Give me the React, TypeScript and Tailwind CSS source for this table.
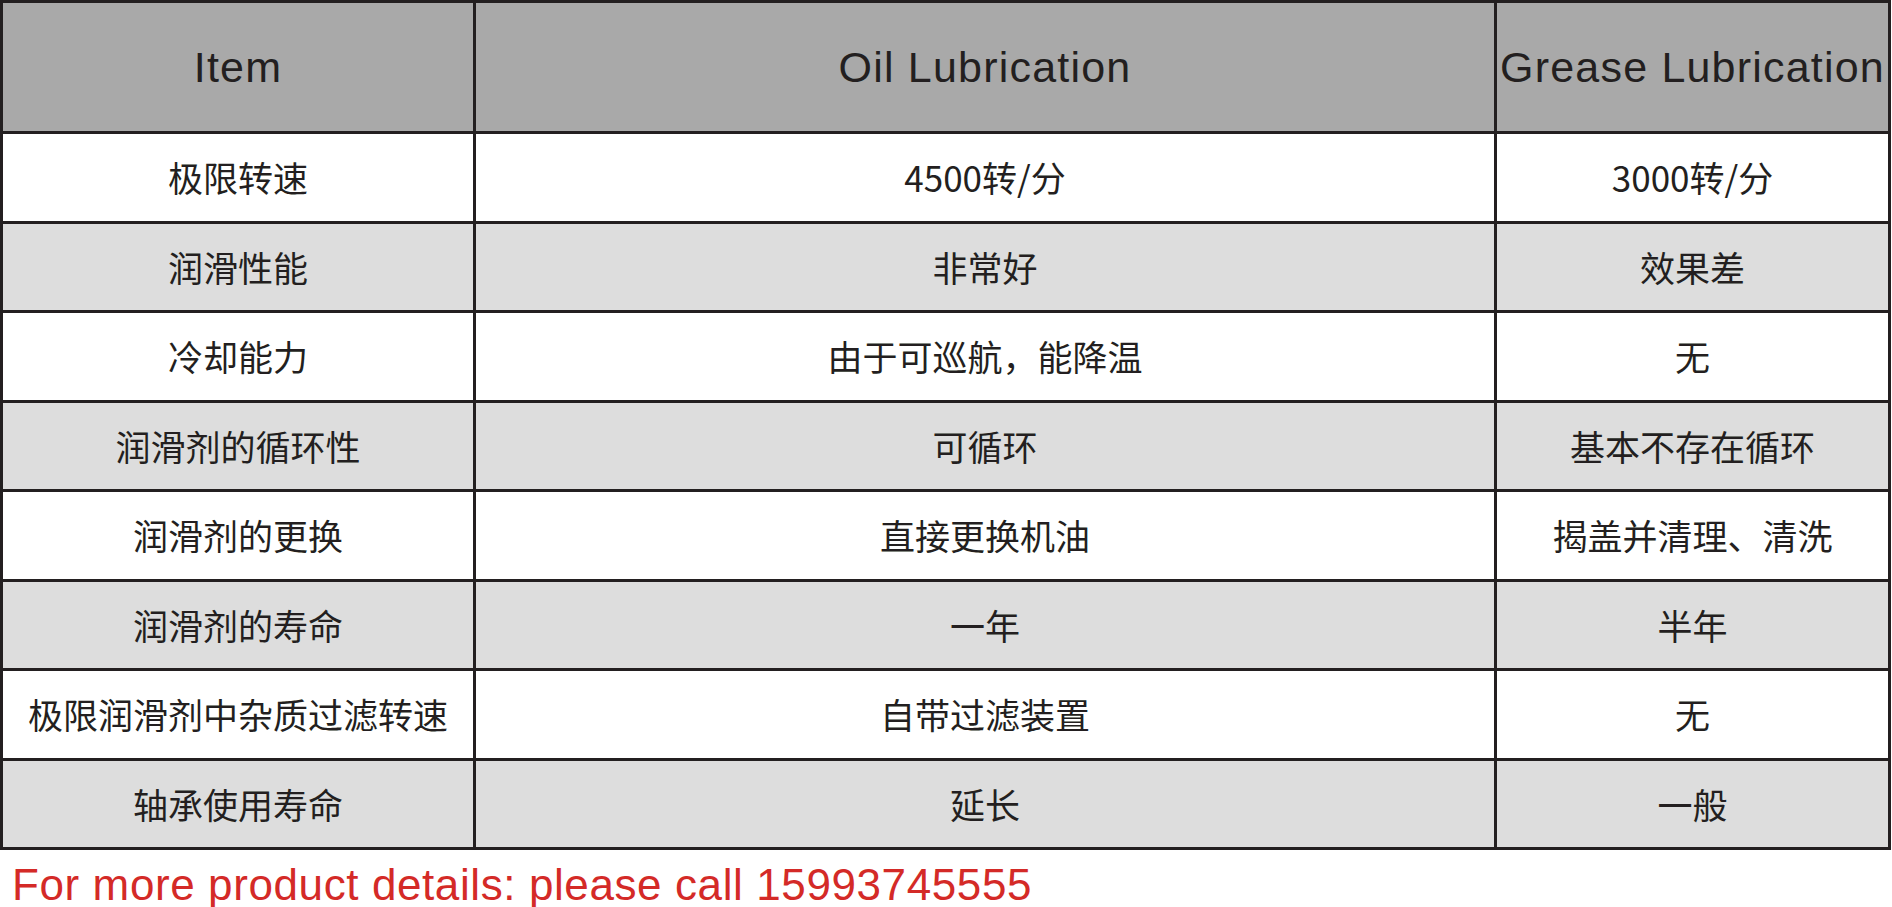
const rows = [
  { item: '极限转速', oil: '4500转/分', grease: '3000转/分' },
  { item: '润滑性能', oil: '非常好', grease: '效果差' },
  { item: '冷却能力', oil: '由于可巡航，能降温', grease: '无' },
  { item: '润滑剂的循环性', oil: '可循环', grease: '基本不存在循环' },
  { item: '润滑剂的更换', oil: '直接更换机油', grease: '揭盖并清理、清洗' },
  { item: '润滑剂的寿命', oil: '一年', grease: '半年' },
  { item: '极限润滑剂中杂质过滤转速', oil: '自带过滤装置', grease: '无' },
  { item: '轴承使用寿命', oil: '延长', grease: '一般' },
];

const headCell =
  'flex items-center justify-center border-r-[3px] border-b-[3px] border-[#231f20] bg-[#a9a9a9] text-[43px] tracking-[1.2px] text-[#231f20] font-["Liberation_Sans",Arial,sans-serif]';

export default function App() {
  return (
    <div className="w-[1892px] h-[907px] overflow-hidden bg-white">
      {/* Comparison table */}
      <div className="grid grid-cols-[473px_1021px_394px] grid-rows-[131px_repeat(8,89.5px)] w-[1891px] border-l-[3px] border-t-[3px] border-[#231f20]">
        <div className={headCell}>Item</div>
        <div className={headCell}>Oil Lubrication</div>
        <div className={`${headCell} whitespace-nowrap`}>Grease Lubrication</div>

        {rows.map((row, i) => {
          const bg = i % 2 === 0 ? 'bg-white' : 'bg-[#dddddd]';
          const cell = `flex items-center justify-center border-r-[3px] border-b-[3px] border-[#231f20] ${bg} text-[35px] text-[#231f20] whitespace-nowrap font-["Noto_Sans_CJK_SC","Noto_Sans",sans-serif]`;
          return [
            <div key={`${i}-a`} className={cell}>{row.item}</div>,
            <div key={`${i}-b`} className={cell}>{row.oil}</div>,
            <div key={`${i}-c`} className={cell}>{row.grease}</div>,
          ];
        })}
      </div>

      {/* Contact line */}
      <div className="mt-[13px] pl-[12px] leading-none text-[44px] tracking-[0.6px] text-[#d42a27] whitespace-nowrap font-['Liberation_Sans',Arial,sans-serif]">
        For more product details: please call 15993745555
      </div>
    </div>
  );
}
